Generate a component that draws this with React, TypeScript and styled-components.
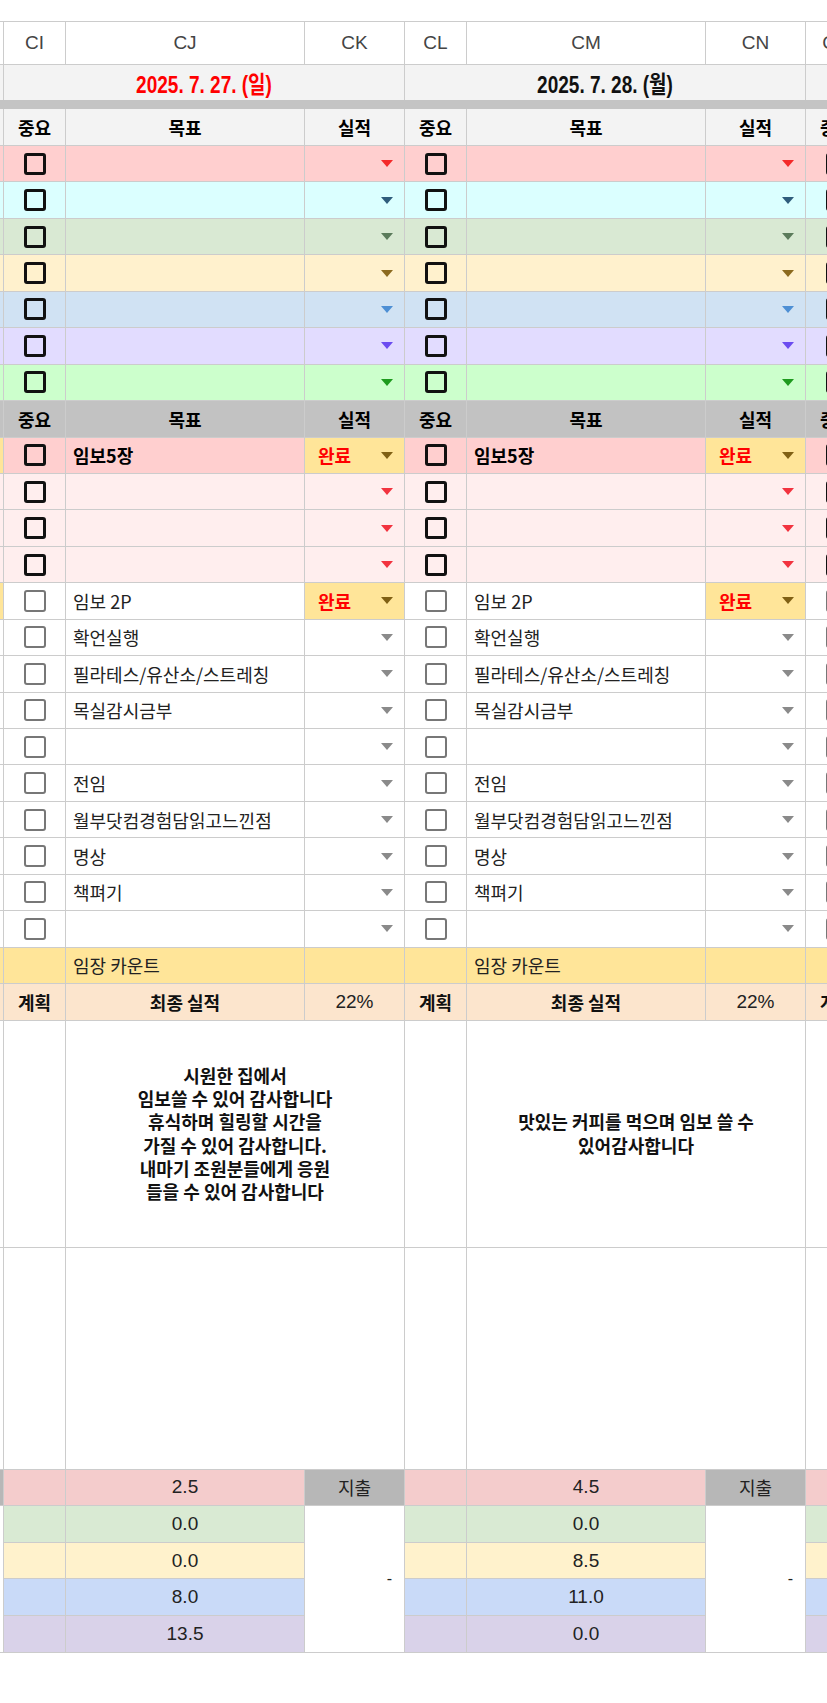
import styled, { createGlobalStyle } from "styled-components";

const ROW = 36.45;
const LINE = "#cccccc";
const KR = `"Noto Sans CJK KR", "Noto Sans", sans-serif`;
const LATIN = `"Liberation Sans", Arial, "Noto Sans CJK KR", sans-serif`;
const COL = { imp: 62, goal: 239, result: 100 };

type Goal = { text: string; done?: boolean };
type Day = {
  letters: [string, string, string];
  date: string;
  dateColor: string;
  note: string;
  totals: string[];
};

const COLOR_ROWS = [
  { bg: "#ffcfcf", arrow: "#f42a2a" },
  { bg: "#dbffff", arrow: "#2f5d7c" },
  { bg: "#d9e9d3", arrow: "#5b7b5b" },
  { bg: "#fff1cd", arrow: "#8c6a1e" },
  { bg: "#d0e2f3", arrow: "#4e8fd4" },
  { bg: "#e2dcff", arrow: "#6b4cf0" },
  { bg: "#ccffcc", arrow: "#1e9a1e" },
];

const PRIORITY_GOALS: Goal[] = [{ text: "임보5장", done: true }, { text: "" }, { text: "" }, { text: "" }];

const DAILY_GOALS: Goal[] = [
  { text: "임보 2P", done: true },
  { text: "확언실행" },
  { text: "필라테스/유산소/스트레칭" },
  { text: "목실감시금부" },
  { text: "" },
  { text: "전임" },
  { text: "월부닷컴경험담읽고느낀점" },
  { text: "명상" },
  { text: "책펴기" },
  { text: "" },
];

const TOTAL_COLORS = ["#f4cccc", "#d9ead3", "#fff2cc", "#c9daf8", "#d9d2e9"];

// previous day: only its last pixels show at the left edge, so no text is drawn for it
const PREVIOUS_DAY: Day = {
  letters: ["CF", "CG", "CH"],
  date: "2025. 7. 26. (토)",
  dateColor: "#1155cc",
  note: "",
  totals: ["0.0", "0.0", "0.0", "0.0", "0.0"],
};

const DAYS: Day[] = [
  {
    letters: ["CI", "CJ", "CK"],
    date: "2025. 7. 27. (일)",
    dateColor: "#ff0000",
    note:
      "시원한 집에서\n임보쓸 수 있어 감사합니다\n휴식하며 힐링할 시간을\n가질 수 있어 감사합니다.\n내마기 조원분들에게 응원\n들을 수 있어 감사합니다",
    totals: ["2.5", "0.0", "0.0", "8.0", "13.5"],
  },
  {
    letters: ["CL", "CM", "CN"],
    date: "2025. 7. 28. (월)",
    dateColor: "#111111",
    note: "맛있는 커피를 먹으며 임보 쓸 수\n있어감사합니다",
    totals: ["4.5", "0.0", "8.5", "11.0", "0.0"],
  },
  {
    letters: ["CO", "CP", "CQ"],
    date: "2025. 7. 29. (화)",
    dateColor: "#111111",
    note: "",
    totals: ["0.0", "0.0", "0.0", "0.0", "0.0"],
  },
];

const GlobalStyle = createGlobalStyle`
  html, body {
    margin: 0;
    padding: 0;
    background: #fff;
  }
  body {
    font-family: ${KR};
    color: #222;
  }
`;

const Page = styled.div`
  width: 100%;
  padding-top: 21px;
  overflow: hidden;
`;

// the sheet is scrolled sideways: only the last sliver of the previous day shows
const Sheet = styled.div`
  display: flex;
  width: max-content;
  margin-left: -397px;
  border-top: 1px solid ${LINE};
`;

const Block = styled.section`
  flex: none;
  width: ${COL.imp + COL.goal + COL.result}px;
  display: flex;
  flex-direction: column;
`;

const Row = styled.div<{ $h: number }>`
  display: flex;
  flex: none;
  height: ${(p) => p.$h}px;
`;

const Cell = styled.div<{ $w?: number; $bg?: string }>`
  box-sizing: border-box;
  flex: ${(p) => (p.$w ? `0 0 ${p.$w}px` : "1 1 auto")};
  display: flex;
  align-items: center;
  padding: 0 7px;
  background: ${(p) => p.$bg ?? "#fff"};
  border-right: 1px solid ${LINE};
  border-bottom: 1px solid ${LINE};
  overflow: hidden;
  white-space: nowrap;
`;

const LetterCell = styled(Cell)`
  justify-content: center;
  font-family: ${LATIN};
  font-size: 19px;
  color: #444;
`;

const DateCell = styled(Cell)`
  justify-content: center;
  border-bottom: none;
`;

const DateText = styled.span<{ $color: string }>`
  display: inline-block;
  font-family: ${LATIN};
  font-size: 19px;
  font-weight: 700;
  color: ${(p) => p.$color};
  transform: scaleY(1.25);
`;

const FreezeBar = styled.div`
  flex: none;
  height: 9px;
  background: #c4c4c4;
`;

const HeadCell = styled(Cell)`
  justify-content: center;
  font-size: 18px;
  font-weight: 700;
  color: #000;
`;

const BoxCell = styled(Cell)`
  justify-content: center;
  padding: 0;
`;

const Checkbox = styled.span<{ $strong?: boolean }>`
  box-sizing: border-box;
  width: 22px;
  height: 22px;
  border: ${(p) => (p.$strong ? "3px solid #111" : "2px solid #777")};
  border-radius: 3px;
`;

const GoalText = styled.span<{ $bold?: boolean }>`
  font-size: 18px;
  font-weight: ${(p) => (p.$bold ? 700 : 400)};
  color: ${(p) => (p.$bold ? "#000" : "#222")};
`;

const ResultCell = styled(Cell)`
  padding: 0 11px 0 13px;
`;

const DoneLabel = styled.span`
  font-size: 18px;
  font-weight: 700;
  color: #ff0000;
`;

const Arrow = styled.span<{ $color: string }>`
  margin-left: auto;
  width: 0;
  height: 0;
  border-left: 6.5px solid transparent;
  border-right: 6.5px solid transparent;
  border-top: 7px solid ${(p) => p.$color};
`;

const CenterCell = styled(Cell)<{ $bold?: boolean }>`
  justify-content: center;
  font-size: 18px;
  font-weight: ${(p) => (p.$bold ? 700 : 400)};
  color: #111;
`;

const NumberCell = styled(Cell)`
  justify-content: center;
  font-family: ${LATIN};
  font-size: 19px;
  color: #222;
`;

const NoteCell = styled(Cell)`
  justify-content: center;
  text-align: center;
  white-space: pre-line;
  font-size: 18px;
  font-weight: 700;
  line-height: 23.3px;
  color: #111;
`;

const Bottom = styled.div`
  display: flex;
  flex: none;
`;

const BottomLeft = styled.div`
  display: flex;
  flex-direction: column;
  width: ${COL.imp + COL.goal}px;
`;

const BottomRight = styled.div`
  display: flex;
  flex-direction: column;
  width: ${COL.result}px;
`;

const ExpenseHead = styled(Cell)`
  flex: 0 0 36.6px;
  justify-content: center;
  font-size: 18px;
  color: #222;
`;

const DashCell = styled(Cell)`
  flex: 1 1 auto;
  justify-content: flex-end;
  padding: 0 12px;
  font-family: ${LATIN};
  font-size: 16px;
  color: #222;
`;

type RowProps = { goal: Goal; bg: string; arrow: string; strong: boolean; blank?: boolean };

function GoalRow({ goal, bg, arrow, strong, blank }: RowProps) {
  return (
    <Row $h={ROW}>
      <BoxCell $w={COL.imp} $bg={bg}>
        <Checkbox $strong={strong} />
      </BoxCell>
      <Cell $w={COL.goal} $bg={bg}>
        {!blank && goal.text && <GoalText $bold={strong}>{goal.text}</GoalText>}
      </Cell>
      <ResultCell $w={COL.result} $bg={goal.done ? "#ffe599" : bg}>
        {!blank && goal.done && <DoneLabel>완료</DoneLabel>}
        <Arrow $color={goal.done ? "#806014" : arrow} />
      </ResultCell>
    </Row>
  );
}

function HeadRow({ bg, h, blank }: { bg: string; h: number; blank?: boolean }) {
  return (
    <Row $h={h}>
      <HeadCell $w={COL.imp} $bg={bg}>{!blank && "중요"}</HeadCell>
      <HeadCell $w={COL.goal} $bg={bg}>{!blank && "목표"}</HeadCell>
      <HeadCell $w={COL.result} $bg={bg}>{!blank && "실적"}</HeadCell>
    </Row>
  );
}

function DayBlock({ day, blank }: { day: Day; blank?: boolean }) {
  const show = (s: string) => (blank ? null : s);

  return (
    <Block>
      <Row $h={43}>
        {day.letters.map((l, i) => (
          <LetterCell key={l} $w={[COL.imp, COL.goal, COL.result][i]}>
            {show(l)}
          </LetterCell>
        ))}
      </Row>
      <Row $h={35}>
        <DateCell $bg="#f3f3f3">
          {!blank && <DateText $color={day.dateColor}>{day.date}</DateText>}
        </DateCell>
      </Row>
      <FreezeBar />
      <HeadRow bg="#f3f3f3" h={37} blank={blank} />

      {COLOR_ROWS.map((tone, i) => (
        <GoalRow key={`c${i}`} goal={{ text: "" }} bg={tone.bg} arrow={tone.arrow} strong />
      ))}

      <HeadRow bg="#c2c2c2" h={ROW} blank={blank} />

      {PRIORITY_GOALS.map((goal, i) => (
        <GoalRow
          key={`p${i}`}
          goal={goal}
          bg={i === 0 ? "#ffcfcf" : "#ffeeee"}
          arrow="#f2333f"
          strong
          blank={blank}
        />
      ))}

      {DAILY_GOALS.map((goal, i) => (
        <GoalRow key={`d${i}`} goal={goal} bg="#fff" arrow="#8a8a8a" strong={false} blank={blank} />
      ))}

      <Row $h={ROW}>
        <Cell $w={COL.imp} $bg="#ffe599" />
        <Cell $w={COL.goal} $bg="#ffe599">
          {!blank && <GoalText>임장 카운트</GoalText>}
        </Cell>
        <Cell $w={COL.result} $bg="#ffe599" />
      </Row>

      <Row $h={ROW}>
        <CenterCell $w={COL.imp} $bg="#fce5cd" $bold>{show("계획")}</CenterCell>
        <CenterCell $w={COL.goal} $bg="#fce5cd" $bold>{show("최종 실적")}</CenterCell>
        <NumberCell $w={COL.result} $bg="#fce5cd">{show("22%")}</NumberCell>
      </Row>

      <Row $h={227.2}>
        <Cell $w={COL.imp} />
        <NoteCell>{show(day.note)}</NoteCell>
      </Row>

      <Row $h={222}>
        <Cell $w={COL.imp} />
        <Cell />
      </Row>

      <Bottom>
        <BottomLeft>
          {day.totals.map((v, i) => (
            <Row key={i} $h={36.6}>
              <Cell $w={COL.imp} $bg={TOTAL_COLORS[i]} />
              <NumberCell $w={COL.goal} $bg={TOTAL_COLORS[i]}>{show(v)}</NumberCell>
            </Row>
          ))}
        </BottomLeft>
        <BottomRight>
          <ExpenseHead $bg="#b7b7b7">{show("지출")}</ExpenseHead>
          <DashCell>{show("-")}</DashCell>
        </BottomRight>
      </Bottom>
    </Block>
  );
}

export default function App() {
  return (
    <>
      <GlobalStyle />
      <Page>
        <Sheet>
          <DayBlock day={PREVIOUS_DAY} blank />
          {DAYS.map((day) => (
            <DayBlock key={day.date} day={day} />
          ))}
        </Sheet>
      </Page>
    </>
  );
}
